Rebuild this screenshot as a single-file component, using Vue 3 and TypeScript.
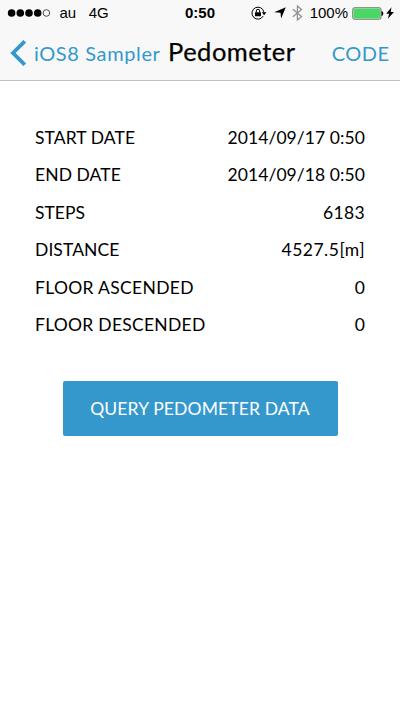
<script setup lang="ts">
interface Reading {
  label: string
  value: string
  labelClass: string
  valueClass: string
}

const readings: Reading[] = [
  { label: 'START DATE', value: '2014/09/17 0:50', labelClass: 'tight', valueClass: 'tight' },
  { label: 'END DATE', value: '2014/09/18 0:50', labelClass: 'tight', valueClass: 'tight' },
  { label: 'STEPS', value: '6183', labelClass: '', valueClass: 'loose' },
  { label: 'DISTANCE', value: '4527.5[m]', labelClass: 'tight', valueClass: 'wide' },
  { label: 'FLOOR ASCENDED', value: '0', labelClass: 'loose', valueClass: '' },
  { label: 'FLOOR DESCENDED', value: '0', labelClass: 'medium', valueClass: '' },
]
</script>

<template>
  <div class="screen">
    <header class="top">
      <div class="status">
        <div class="side">
          <svg class="signal" width="44" height="10" viewBox="0 0 44 10">
            <circle cx="4.6" cy="5" r="3.8" />
            <circle cx="13.3" cy="5" r="3.8" />
            <circle cx="22" cy="5" r="3.8" />
            <circle cx="30.7" cy="5" r="3.8" />
            <circle class="hollow" cx="39.4" cy="5" r="3.3" />
          </svg>
          <span class="carrier">au</span>
          <span class="network">4G</span>
        </div>
        <span class="clock">0:50</span>
        <div class="side right">
          <svg class="lock" width="16" height="14" viewBox="0 0 16 14">
            <path class="ring" d="M12.2 10.1A6 6 0 1 1 12.9 6.2" />
            <path d="M10.8 6.2h4.6l-2.3 3z" />
            <rect x="4" y="6.2" width="6" height="4" rx=".4" />
            <path class="shackle" d="M5.3 6.4V5a1.7 1.7 0 0 1 3.4 0v1.4" />
          </svg>
          <svg class="arrow" width="12" height="12" viewBox="0 0 12 12">
            <path d="M11.8.2 7.1 11.6 6.5 5.7.2 5.2z" />
          </svg>
          <svg class="bluetooth" width="11" height="16" viewBox="0 0 11 16">
            <path d="M.8 4.2l8.8 7.3L5.4 15V1l4.2 3.5L.8 11.8" />
          </svg>
          <span class="percent">100%</span>
          <svg class="battery" width="32" height="13" viewBox="0 0 32 13">
            <rect class="shell" x=".8" y=".8" width="28.2" height="11.4" rx="1.5" />
            <rect class="charge" x="1.5" y="1.5" width="26.8" height="10" rx=".6" />
            <path d="M29.5 4c2.4.5 2.4 4.5 0 5z" />
          </svg>
          <svg class="bolt" width="8" height="12" viewBox="0 0 8 12">
            <path d="M5.5.3.2 6.7h2.9L1.9 11.8 7.9 5H4.7z" />
          </svg>
        </div>
      </div>
      <nav class="nav">
        <button class="back" type="button">
          <svg width="16" height="26" viewBox="0 0 16 26">
            <path d="M14.7 1.3 3 13l11.7 11.7" />
          </svg>
          <span>iOS8 Sampler</span>
        </button>
        <h1>Pedometer</h1>
        <button class="code" type="button">CODE</button>
      </nav>
    </header>
    <main>
      <dl>
        <div v-for="r in readings" :key="r.label" class="row">
          <dt :class="r.labelClass">{{ r.label }}</dt>
          <dd :class="r.valueClass">{{ r.value }}</dd>
        </div>
      </dl>
      <button class="query" type="button">QUERY PEDOMETER DATA</button>
    </main>
  </div>
</template>

<style>
body {
  background: #fff;
}
</style>

<style scoped>
.screen {
  width: 400px;
  height: 710px;
  overflow: hidden;
  background: #fff;
  color: #000;
  font-family: Lato, sans-serif;
  white-space: nowrap;
}
button {
  margin: 0;
  padding: 0;
  border: 0;
  background: none;
  color: #3498cd;
  font: inherit;
}
svg {
  flex: none;
  display: block;
}
.top {
  box-sizing: border-box;
  height: 81px;
  background: #f8f8f8;
  border-bottom: 1px solid #bdbdbd;
}
.status {
  display: grid;
  grid-template-columns: 1fr auto 1fr;
  height: 26px;
  align-items: center;
  font: 15px/26px "Liberation Sans", sans-serif;
}
.side {
  display: flex;
  align-items: center;
  padding-left: 7px;
}
.right {
  justify-content: flex-end;
  padding: 0 6px 0 0;
}
.hollow {
  fill: none;
  stroke: #222;
  stroke-width: 0.8;
}
.carrier {
  margin-left: 8.5px;
}
.network {
  margin-left: 12.5px;
}
.clock {
  font-weight: 700;
}
.ring,
.shackle {
  fill: none;
  stroke: #000;
  stroke-width: 1;
}
.arrow {
  margin-left: 7px;
}
.bluetooth {
  margin-left: 6px;
  fill: none;
  stroke: #929292;
  stroke-width: 1.3;
}
.percent {
  margin-left: 7px;
}
.battery {
  margin-left: 4px;
}
.shell {
  fill: #fff;
  stroke: #666;
  stroke-width: 1;
}
.charge {
  fill: #4bd763;
}
.bolt {
  margin-left: 2px;
}
.nav {
  display: flex;
  height: 54px;
  align-items: center;
  padding: 0 11px 0 10px;
}
.back {
  display: flex;
  align-items: center;
  gap: 8px;
  font-size: 20px;
  letter-spacing: 0.62px;
}
.back path {
  fill: none;
  stroke: #3498cd;
  stroke-width: 3.8;
}
h1 {
  margin: 0 0 4px 7.5px;
  font-size: 25.5px;
  font-weight: 400;
  letter-spacing: 0.5px;
  -webkit-text-stroke: 0.25px #000;
}
.code {
  margin-left: auto;
  font-size: 20px;
  letter-spacing: 0.5px;
  margin-right: -0.5px;
}
main {
  padding: 37.6px 35px 0;
}
dl {
  margin: 0;
}
.row {
  display: flex;
  justify-content: space-between;
  height: 37.48px;
  align-items: center;
  font-size: 17.5px;
}
dd {
  margin: 0;
}
.tight {
  letter-spacing: 0.08px;
}
.medium {
  letter-spacing: 0.26px;
}
.loose {
  letter-spacing: 0.32px;
}
.wide {
  letter-spacing: 0.5px;
}
.query {
  display: block;
  width: 275px;
  height: 55px;
  margin: 37.5px auto 0;
  border-radius: 2px;
  background: #3498cd;
  color: #fff;
  font-size: 17.5px;
  letter-spacing: 0.14px;
}
</style>
